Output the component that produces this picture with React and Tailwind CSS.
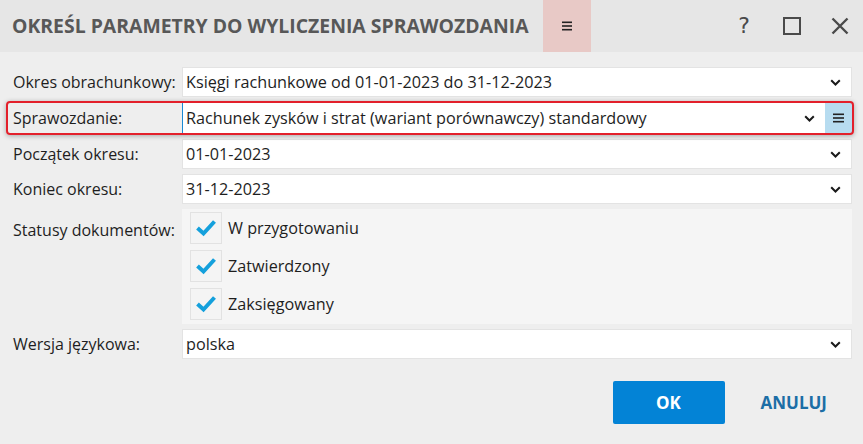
import React from "react";

const font = { fontFamily: '"Open Sans", "Noto Sans", sans-serif' };

function Chevron() {
  return (
    <svg width="11" height="7" viewBox="0 0 11 7" className="shrink-0">
      <path d="M1.2 1.2 L5.5 5.5 L9.8 1.2" fill="none" stroke="#1a1a1a" strokeWidth="2" />
    </svg>
  );
}

function Burger({ w = 11 }) {
  return (
    <svg width={w} height="10" viewBox={`0 0 ${w} 10`}>
      <rect x="0" y="0.5" width={w} height="1.6" fill="#222" />
      <rect x="0" y="4.2" width={w} height="1.6" fill="#222" />
      <rect x="0" y="7.9" width={w} height="1.6" fill="#222" />
    </svg>
  );
}

function Check() {
  return (
    <div className="w-[32px] h-[32px] border border-[#e2e2e2] bg-[#f4f4f4] flex items-center justify-center">
      <svg width="22" height="18" viewBox="0 0 22 18">
        <path d="M2.5 9 L8.5 14.5 L19.5 2.5" fill="none" stroke="#14a0dc" strokeWidth="4" strokeLinejoin="miter" />
      </svg>
    </div>
  );
}

function Row({ label, value }) {
  return (
    <div className="flex items-stretch h-[30px]">
      <div className="w-[169px] shrink-0 flex items-center text-[16px] text-[#1e1e1e]">{label}</div>
      <div className="flex-1 bg-white border border-[#e3e3e3] flex items-center pl-[3px] pr-[10px] text-[16.2px] text-[#1e1e1e]">
        <span className="flex-1">{value}</span>
        <Chevron />
      </div>
    </div>
  );
}

export default function App() {
  return (
    <div style={font} className="w-[863px] h-[444px] bg-[#eeeeee] flex flex-col overflow-hidden">
      <div className="h-[52px] bg-[#e6e6e6] flex items-stretch shrink-0">
        <div className="pl-[12px] pr-[14px] flex items-center text-[19.4px] font-bold text-[#585858]">
          OKREŚL PARAMETRY DO WYLICZENIA SPRAWOZDANIA
        </div>
        <div className="w-[48px] bg-[#e8c9c6] flex items-center justify-center">
          <Burger w={10} />
        </div>
        <div className="flex-1" />
        <div className="flex items-center text-[#4a4a4a]">
          <div className="w-[46px] flex justify-center text-[22px] leading-none" style={{ fontFamily: '"DejaVu Sans", sans-serif' }}>?</div>
          <div className="w-[50px] flex justify-center">
            <div className="w-[18px] h-[18px] border-[2.5px] border-[#4a4a4a]" />
          </div>
          <div className="w-[46px] flex justify-center">
            <svg width="18" height="18" viewBox="0 0 18 18">
              <path d="M1.5 1.5 L16.5 16.5 M16.5 1.5 L1.5 16.5" stroke="#4a4a4a" strokeWidth="2.4" />
            </svg>
          </div>
        </div>
      </div>

      <div className="flex flex-col pl-[13px] pr-[11px] pt-[15px] gap-[5px]">
        <Row label="Okres obrachunkowy:" value="Księgi rachunkowe od 01-01-2023 do 31-12-2023" />

        <div className="relative flex items-stretch h-[32px]">
          <div className="w-[169px] shrink-0 flex items-center text-[16px] text-[#1e1e1e]">Sprawozdanie:</div>
          <div className="flex-1 bg-white border-l border-[#1a8ad4] flex items-center pl-[3px] text-[16.2px] text-[#1e1e1e]">
            <span className="flex-1">Rachunek zysków i strat (wariant porównawczy) standardowy</span>
            <div className="pr-[10px]"><Chevron /></div>
            <div className="w-[27px] self-stretch bg-[#b7dcf0] flex items-center justify-center">
              <Burger w={11} />
            </div>
          </div>
          <div className="absolute -left-[7px] -right-[2px] -top-[1px] -bottom-[1px] border-2 border-[#e3202b] rounded-[4px] shadow-[0_1px_5px_rgba(0,0,0,0.3)] pointer-events-none" />
        </div>

        <Row label="Początek okresu:" value="01-01-2023" />
        <Row label="Koniec okresu:" value="31-12-2023" />

        <div className="flex items-stretch">
          <div className="w-[169px] shrink-0 pt-[9px] text-[16px] text-[#1e1e1e]">Statusy dokumentów:</div>
          <div className="flex-1 bg-[#f5f5f5] flex flex-col gap-[6px] pl-[8px] pt-[3px] pb-[4px]">
            {["W przygotowaniu", "Zatwierdzony", "Zaksięgowany"].map((t) => (
              <div key={t} className="flex items-center gap-[6px] text-[16.2px] text-[#1e1e1e]">
                <Check />
                <span>{t}</span>
              </div>
            ))}
          </div>
        </div>

        <Row label="Wersja językowa:" value="polska" />
      </div>

      <div className="flex justify-end items-center pr-[36px] pt-[22px]">
        <div className="w-[112px] h-[43px] bg-[#0383d6] rounded-[2px] flex items-center justify-center text-white font-bold text-[17px]">OK</div>
        <div className="ml-[36px] text-[#1c6ea6] font-bold text-[17px]">ANULUJ</div>
      </div>
    </div>
  );
}
